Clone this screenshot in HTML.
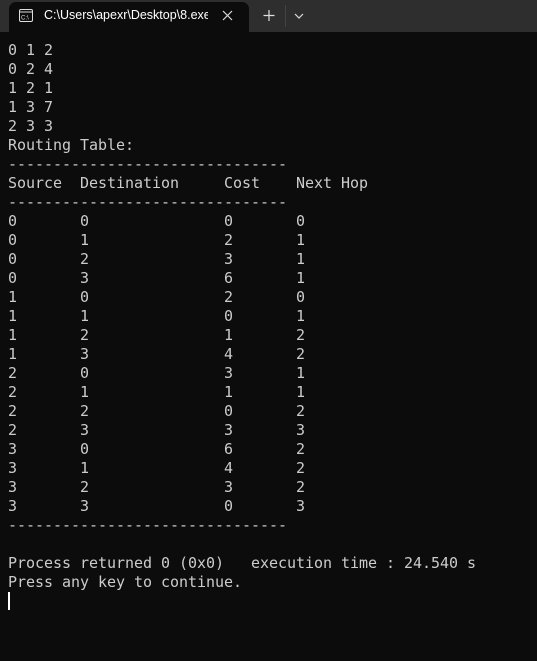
<!DOCTYPE html>
<html><head><meta charset="utf-8"><style>
html,body{margin:0;padding:0;width:537px;height:661px;background:#0c0c0c;overflow:hidden}
.bar{position:absolute;left:0;top:0;width:537px;height:32px;background:#2e2e2e}
.tab{position:absolute;left:9px;top:2px;width:240px;height:32px;background:#0c0c0c;border-radius:7px 7px 0 0}
.title{position:absolute;left:44px;top:8px;width:164px;overflow:hidden;white-space:nowrap;color:#fff;font:12.5px "Liberation Sans",sans-serif}
pre{position:absolute;left:8px;top:41px;margin:0;color:#cccccc;font:15px/19px "DejaVu Sans Mono","Liberation Mono",monospace;letter-spacing:-0.03px}
.cur{position:absolute;left:8px;top:592px;width:2px;height:18px;background:#fff}
</style></head><body>
<div class="bar"></div>
<div class="tab"></div>
<svg style="position:absolute;left:0;top:0" width="537" height="32">
<rect x="19.5" y="9.5" width="13" height="12" rx="1.5" fill="none" stroke="#ddd" stroke-width="1"/>
<line x1="20" y1="12" x2="32" y2="12" stroke="#ddd"/>
<text x="21" y="19.5" font-size="6" fill="#ddd" font-family="Liberation Sans">C:\</text>
<path d="M223 11 L232 20 M232 11 L223 20" stroke="#ddd" stroke-width="1.2"/>
<path d="M269 10 V21 M263.5 15.5 H274.5" stroke="#ddd" stroke-width="1.2"/>
<line x1="285.5" y1="5" x2="285.5" y2="27" stroke="#444"/>
<path d="M295 14 L299 18 L303 14" fill="none" stroke="#ddd" stroke-width="1.2"/>
</svg>
<div class="title">C:\Users\apexr\Desktop\8.exe</div>
<pre>0 1 2
0 2 4
1 2 1
1 3 7
2 3 3
Routing Table:
-------------------------------
Source  Destination     Cost    Next Hop
-------------------------------
0       0               0       0
0       1               2       1
0       2               3       1
0       3               6       1
1       0               2       0
1       1               0       1
1       2               1       2
1       3               4       2
2       0               3       1
2       1               1       1
2       2               0       2
2       3               3       3
3       0               6       2
3       1               4       2
3       2               3       2
3       3               0       3
-------------------------------

Process returned 0 (0x0)   execution time : 24.540 s
Press any key to continue.</pre>
<div class="cur"></div>
</body></html>
